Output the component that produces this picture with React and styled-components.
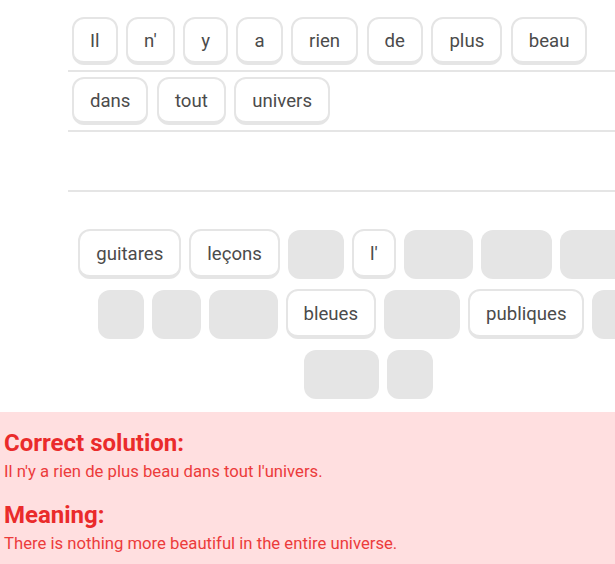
import React from "react";
import styled, { createGlobalStyle } from "styled-components";

const GlobalStyle = createGlobalStyle`
  html, body {
    margin: 0;
    padding: 0;
    background: #fff;
    overflow: hidden;
  }
  body {
    font-family: Roboto, "Noto Sans", sans-serif;
  }
`;

const answerRows = [
  ["Il", "n'", "y", "a", "rien", "de", "plus", "beau"],
  ["dans", "tout", "univers"],
  [],
];

// bank tiles: a word, or a number = width of an empty slot
const bankRows = [
  ["guitares", "leçons", 56, "l'", 69, 71, 98],
  [46, 49, 69, "bleues", 76, "publiques", 46],
  [75, 46],
];

const Page = styled.div`
  display: flex;
  flex-direction: column;
  width: 615px;
`;

const Exercise = styled.div`
  width: 600px;
  margin-left: 68px;
  padding-top: 12px;
`;

const AnswerLine = styled.div`
  height: 58px;
  border-bottom: 2px solid #e5e5e5;
  display: flex;
  align-items: center;
  gap: 8.5px;
  padding-left: 4px;
`;

const Bank = styled.div`
  display: flex;
  flex-direction: column;
  gap: 10px;
  margin-top: 37px;
`;

const BankRow = styled.div`
  display: flex;
  justify-content: center;
  gap: 8px;
`;

const Tile = styled.div`
  box-sizing: border-box;
  height: ${(p) => p.$h}px;
  padding: 2px 16px 0;
  display: flex;
  align-items: center;
  justify-content: center;
  background: #fff;
  border: 2px solid #e5e5e5;
  border-bottom-width: 4px;
  border-radius: 12px;
  color: #4b4b4b;
  font-size: 18.6px;
  white-space: nowrap;
  flex-shrink: 0;
`;

const Slot = styled.div`
  height: 49px;
  width: ${(p) => p.$w}px;
  margin-top: 1px;
  border-radius: 12px;
  background: #e5e5e5;
  flex-shrink: 0;
`;

const Feedback = styled.div`
  margin-top: 13px;
  background: #ffdfe0;
  padding: 17px 4px 20px;
  color: #ea2b2b;
`;

const Heading = styled.h2`
  margin: ${(p) => (p.$first ? "0" : "19px")} 0 5px;
  font-size: 24px;
  font-weight: 700;
  line-height: 28px;
`;

const Sentence = styled.p`
  margin: 0;
  font-size: 16.7px;
  line-height: 20px;
  color: #ec3b3b;
`;

export default function App() {
  return (
    <>
      <GlobalStyle />
      <Page>
        <Exercise>
          {answerRows.map((row, i) => (
            <AnswerLine key={i}>
              {row.map((w, j) => (
                <Tile key={j} $h={48}>
                  {w}
                </Tile>
              ))}
            </AnswerLine>
          ))}
          <Bank>
            {bankRows.map((row, i) => (
              <BankRow key={i}>
                {row.map((t, j) =>
                  typeof t === "number" ? (
                    <Slot key={j} $w={t} />
                  ) : (
                    <Tile key={j} $h={50}>
                      {t}
                    </Tile>
                  )
                )}
              </BankRow>
            ))}
          </Bank>
        </Exercise>
        <Feedback>
          <Heading $first>Correct solution:</Heading>
          <Sentence>Il n'y a rien de plus beau dans tout l'univers.</Sentence>
          <Heading>Meaning:</Heading>
          <Sentence>There is nothing more beautiful in the entire universe.</Sentence>
        </Feedback>
      </Page>
    </>
  );
}
